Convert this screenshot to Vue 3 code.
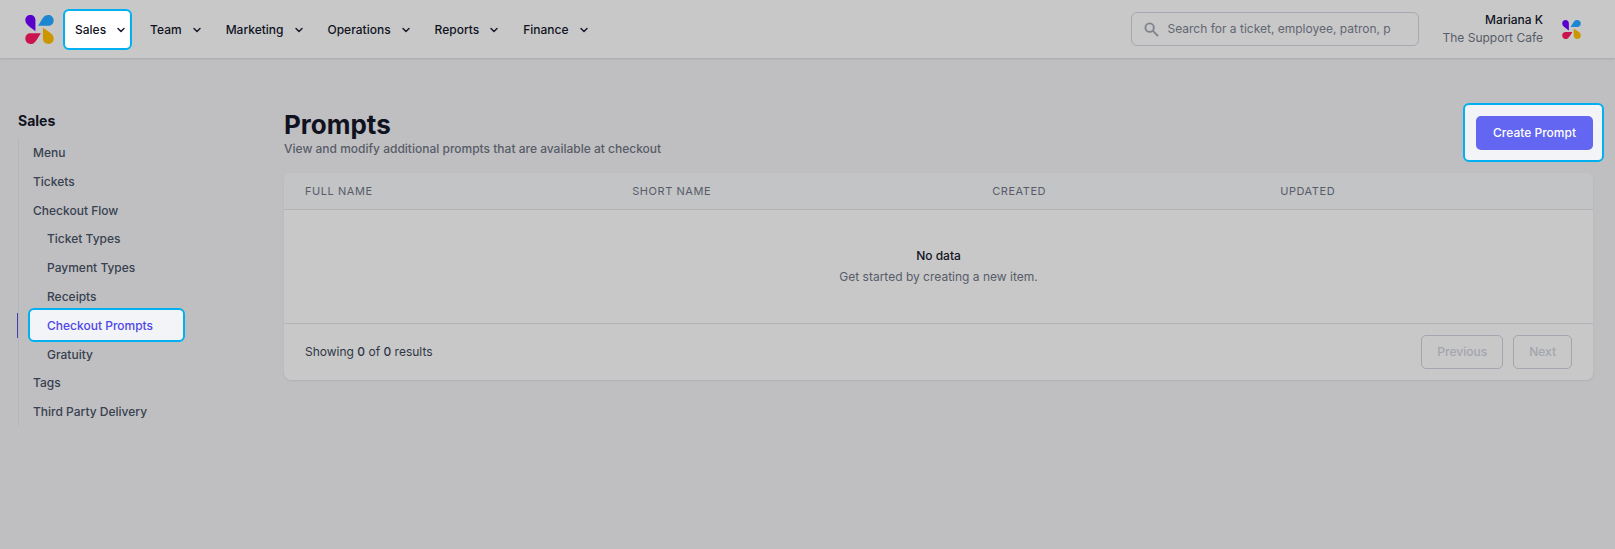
<script setup>
const sections = ['Sales', 'Team', 'Marketing', 'Operations', 'Reports', 'Finance']

const sideLinks = [
  { label: 'Menu' },
  { label: 'Tickets' },
  {
    label: 'Checkout Flow',
    children: ['Ticket Types', 'Payment Types', 'Receipts', 'Checkout Prompts', 'Gratuity'],
  },
  { label: 'Tags' },
  { label: 'Third Party Delivery' },
]
const activeLink = 'Checkout Prompts'

const petals = [
  { fill: '#5a00cc', d: 'M15 24 V8 C15 3 12 0 7.500 0 C3 0 0 3 0 7.500 C0 13 4 16 15 24 Z' },
  { fill: '#1c86d1', d: 'M19 16 H34 C38 16 42 13 42 8 C42 3 38 0 34 0 C28 0 26 4 19 16 Z' },
  { fill: '#c9144e', d: 'M23 27 H8 C3 27 0 30 0 35 C0 39 3 43 8 43 C14 43 16 38 23 27 Z' },
  { fill: '#cb9700', d: 'M26 19 V35 C26 40 30 43 34 43 C39 43 42 40 42 35 C42 29 38 27 26 19 Z' },
]
const columns = ['Full name', 'Short name', 'Created', 'Updated']
</script>

<template>
  <div class="page">
    <header class="topbar">
      <a class="brand" href="#" aria-label="Home">
        <svg viewBox="0 0 42 43" aria-hidden="true">
          <path v-for="p in petals" :key="p.fill" :d="p.d" :fill="p.fill" />
        </svg>
      </a>
      <nav class="sections" aria-label="Main">
        <button
          v-for="name in sections"
          :key="name"
          type="button"
          class="section"
          :class="{ spotlight: name === 'Sales' }"
        >
          <span>{{ name }}</span>
          <svg class="chevron" viewBox="0 0 18 18" aria-hidden="true">
            <path d="M6 7.500 L9 10.500 L12 7.500" />
          </svg>
        </button>
      </nav>
      <label class="search">
        <svg viewBox="0 0 16 16" aria-hidden="true">
          <circle cx="6" cy="6" r="4.500" />
          <path d="M9.500 9.500 L15 15" />
        </svg>
        <input
          type="text"
          aria-label="Search"
          placeholder="Search for a ticket, employee, patron, product"
        />
      </label>
      <div class="account">
        <span class="who">Mariana K</span>
        <span class="company">The Support Cafe</span>
      </div>
      <a class="avatar" href="#" aria-label="Account">
        <svg viewBox="0 0 42 43" aria-hidden="true">
          <path v-for="p in petals" :key="p.fill" :d="p.d" :fill="p.fill" />
        </svg>
      </a>
    </header>

    <div class="body">
      <aside class="sidebar">
        <h2>Sales</h2>
        <ul class="tree">
          <li v-for="link in sideLinks" :key="link.label">
            <a href="#">{{ link.label }}</a>
            <ul v-if="link.children" class="subtree">
              <li v-for="child in link.children" :key="child" :class="{ active: child === activeLink }">
                <a href="#">{{ child }}</a>
              </li>
            </ul>
          </li>
        </ul>
      </aside>

      <main class="content">
        <div class="heading">
          <div>
            <h1>Prompts</h1>
            <p>View and modify additional prompts that are available at checkout</p>
          </div>
          <div class="action">
            <button type="button" class="primary">Create Prompt</button>
          </div>
        </div>

        <section class="card">
          <table>
            <thead>
              <tr>
                <th v-for="c in columns" :key="c" scope="col">{{ c }}</th>
              </tr>
            </thead>
            <tbody>
              <tr>
                <td colspan="4">
                  <h3>No data</h3>
                  <p>Get started by creating a new item.</p>
                </td>
              </tr>
            </tbody>
          </table>
          <footer>
            <p>Showing <b>0</b> of <b>0</b> results</p>
            <div class="pager">
              <button type="button" disabled>Previous</button>
              <button type="button" disabled>Next</button>
            </div>
          </footer>
        </section>
      </main>
    </div>
  </div>
</template>

<style>
body {
  margin: 0;
  background: #bfbfc1;
}
</style>

<style scoped>
* {
  box-sizing: border-box;
}
.page {
  min-height: 100vh;
  background: #bfbfc1;
  color: #10131f;
  font: 400 12px/18px Inter, "Liberation Sans", sans-serif;
}
h1, h2, h3, p, ul {
  margin: 0;
  padding: 0;
}
ul {
  list-style: none;
}
a {
  color: inherit;
  text-decoration: none;
}
button {
  font: inherit;
  color: inherit;
  background: none;
  border: 0;
  padding: 0;
}

.topbar {
  display: flex;
  align-items: center;
  height: 58px;
  padding: 0 34px 0 25px;
  background: #c8c8c8;
  box-shadow: 0 1px 2px #a9a9ac;
}
.brand svg,
.avatar svg {
  display: block;
}
.brand svg {
  width: 29px;
  height: 29px;
}
.avatar svg {
  width: 19px;
  height: 19px;
}
.sections {
  display: flex;
  gap: 20px;
  margin-left: 21px;
  margin-right: auto;
}
.section {
  position: relative;
  display: flex;
  align-items: center;
  gap: 6px;
  padding-top: 2px;
  font-weight: 500;
}
.chevron {
  width: 18px;
  height: 18px;
  fill: none;
  stroke: #1b1e2b;
  stroke-width: 1.5;
  stroke-linecap: round;
  stroke-linejoin: round;
}
.spotlight,
.action,
.active {
  isolation: isolate;
}
.spotlight::before,
.action::before,
.active a::before {
  content: "";
  position: absolute;
  z-index: -1;
  border: 2px solid #00b0f0;
  border-radius: 6px;
  background: #f3f4f7;
}
.spotlight::before {
  inset: -10px -2px -11px -12px;
  background: #fff;
}
.search {
  display: flex;
  align-items: center;
  gap: 9px;
  width: 288px;
  height: 34px;
  padding: 0 27px 0 12px;
  margin-right: 24px;
  border: 1px solid #a5a8b0;
  border-radius: 6px;
}
.search svg {
  flex: none;
  width: 15px;
  height: 15px;
  fill: none;
  stroke: #7d828d;
  stroke-width: 2;
}
.search input {
  flex: 1;
  min-width: 0;
  padding: 0;
  border: 0;
  outline: 0;
  background: none;
  font: inherit;
  color: #10131f;
  appearance: none;
}
.search input::placeholder {
  color: #616672;
  opacity: 1;
}
.account {
  display: flex;
  flex-direction: column;
  text-align: right;
  margin-right: 19px;
}
.who {
  font-weight: 500;
}
.company {
  color: #575c68;
}

.body {
  display: flex;
  padding: 52px 22px 0 18px;
}
.sidebar {
  flex: none;
  width: 266px;
}
.sidebar h2 {
  font-size: 14px;
  font-weight: 700;
  line-height: 22px;
}
.tree {
  margin-top: 6px;
  border-left: 1px solid #b5b6b9;
  color: #384150;
  font-weight: 500;
}
.tree a {
  display: block;
  padding-left: 14px;
  line-height: 29px;
}
.subtree {
  margin: -1px 0;
}
.subtree a {
  padding-left: 28px;
}
.active {
  position: relative;
  color: #4f46e5;
}
.active::before {
  content: "";
  position: absolute;
  left: -2px;
  top: 2px;
  bottom: 2px;
  width: 1px;
  background: #453eb0;
}
.active a::before {
  inset: -3px 99px -2px 9px;
}

.content {
  flex: 1;
  min-width: 0;
}
.heading {
  display: flex;
  justify-content: space-between;
  align-items: flex-start;
}
h1 {
  font-size: 26px;
  line-height: 30px;
  font-weight: 700;
}
.heading p {
  color: #575c68;
  font-weight: 500;
}
.action {
  position: relative;
  margin-top: 6px;
}
.action::before {
  inset: -13px -11px -12px -13px;
}
.primary {
  display: block;
  height: 34px;
  padding: 0 17px;
  border-radius: 5px;
  background: #6366f1;
  color: #fff;
  font-weight: 500;
}

.card {
  margin-top: 15px;
  border-radius: 7px;
  overflow: hidden;
  background: #c8c8c8;
  box-shadow: 0 1px 2px #b0b0b4;
}
table {
  width: 100%;
  table-layout: fixed;
  border-collapse: collapse;
}
th {
  height: 36px;
  padding: 0 21px;
  border-bottom: 1px solid #b1b3b7;
  background: #c3c4c6;
  color: #575c68;
  font-size: 11px;
  font-weight: 400;
  letter-spacing: 0.05em;
  text-align: left;
  text-transform: uppercase;
}
th:nth-child(1) {
  width: 25%;
}
th:nth-child(2) {
  width: 27.5%;
}
th:nth-child(3) {
  width: 22%;
}
td {
  height: 114px;
  padding: 0;
  text-align: center;
}
td h3 {
  font-size: 12px;
  font-weight: 500;
}
td p {
  margin-top: 3px;
  color: #575c68;
}
footer {
  display: flex;
  justify-content: space-between;
  align-items: center;
  padding: 11px 21px;
  border-top: 1px solid #b1b3b7;
  color: #2f3746;
}
footer b {
  font-weight: 500;
}
.pager {
  display: flex;
  gap: 10px;
}
.pager button {
  height: 34px;
  padding: 0 15px;
  border: 1px solid #a3a5af;
  border-radius: 5px;
  color: #a3a5af;
  font-weight: 500;
}
</style>
